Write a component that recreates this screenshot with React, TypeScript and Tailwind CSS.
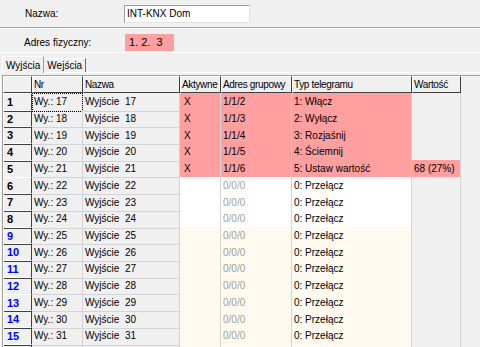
import React from 'react';

const types = ['1: Włącz', '2: Wyłącz', '3: Rozjaśnij', '4: Ściemnij', '5: Ustaw wartość'];

const rows = Array.from({ length: 16 }, (_, k) => {
  const i = k + 1;
  const active = i <= 5;
  const blank = i === 16; // only the top edge of this row is visible
  return {
    id: i,
    num: blank ? '' : String(i),
    nr: blank ? '' : `Wy.: ${16 + i}`,
    name: blank ? '' : `Wyjście\u00a0\u00a0${16 + i}`,
    active,
    addr: blank ? '' : active ? `1/1/${i + 1}` : '0/0/0',
    type: blank ? '' : active ? types[k] : '0: Przełącz',
    value: i === 5 ? '68 (27%)' : '',
    bg: active ? 'bg-[#ff9f9f]' : i <= 8 ? 'bg-white' : 'bg-[#fffaf0]',
  };
});

const cols = 'grid grid-cols-[29px_51px_97px_41px_71px_120px_49px]';

function App() {
  return (
    <div
      className="w-[480px] h-[347px] overflow-hidden bg-[#f0f0f0] text-[10px] text-black"
      style={{ fontFamily: '"Liberation Sans", Arial, sans-serif' }}
    >
      {/* Nazwa */}
      <div className="h-[27px] flex items-center">
        <span className="w-[124px] pl-[25px]">Nazwa:</span>
        <div className="w-[126px] h-[18px] bg-white border-t border-l border-[#a0a0a0] border-r border-b border-r-[#e3e3e3] border-b-[#e3e3e3] flex items-center pl-[2px] leading-none">
          INT-KNX Dom
        </div>
      </div>
      <div className="border-t border-[#a0a0a0] border-b border-b-white" />

      {/* Adres fizyczny */}
      <div className="h-[23px] flex items-center">
        <span className="w-[125px] pl-[24px] pt-[3px]">Adres fizyczny:</span>
        <div className="w-[49px] h-[17px] bg-[#ff9f9f] flex items-center pl-[4px] text-[11px] leading-none mt-[3px]">
          1. 2.&nbsp; 3
        </div>
      </div>
      <div className="border-t border-white" />

      {/* Tabs */}
      <div className="h-[19px] flex items-end pl-[2px]">
        <div className="h-[17px] px-[3px] border-t border-l border-white border-r border-r-[#a0a0a0] bg-[#f0f0f0] flex items-center relative z-10 -mb-px">
          Wyjścia
        </div>
        <div className="h-[14px] px-[3px] border-t border-white border-r border-r-[#696969] flex items-center">
          Wejścia
        </div>
      </div>

      {/* Tab page */}
      <div className="border-t border-white border-l pl-px pt-[2px]">
        <div className="border-t border-l border-[#a0a0a0]">
          {/* header */}
          <div className={`${cols} h-[17px]`}>
            {['', 'Nr', 'Nazwa', 'Aktywne', 'Adres grupowy', 'Typ telegramu', 'Wartość'].map((h, idx) => (
              <div
                key={idx}
                className="border-t border-l border-white border-r border-b border-r-[#404040] border-b-[#404040] flex items-center pl-[1px] whitespace-nowrap overflow-hidden tracking-[-0.35px]"
              >
                {h}
              </div>
            ))}
          </div>
          {rows.map((r) => (
            <div key={r.id} className={`${cols} h-[16.73px]`}>
              <div
                className={`border-t border-l border-white border-r border-b border-r-[#404040] border-b-[#404040] flex items-center pl-[3px] font-bold text-[11px] ${
                  r.id >= 9 ? 'text-[#0000ff]' : 'text-black'
                }`}
              >
                {r.num}
              </div>
              <div
                className={`border-r border-b border-[#d4d4d4] flex items-center pl-[2px] whitespace-nowrap ${
                  r.id === 1 ? 'outline-1 outline-dotted outline-black -outline-offset-1' : ''
                }`}
              >
                {r.nr}
              </div>
              <div className="border-r border-b border-[#d4d4d4] flex items-center pl-[2px] whitespace-nowrap">
                {r.name}
              </div>
              <div className={`border-r border-b border-[#d4d4d4] flex items-center pl-[4px] ${r.bg}`}>
                {r.active ? 'X' : ''}
              </div>
              <div
                className={`border-r border-b border-[#d4d4d4] flex items-center pl-[2px] ${r.bg} ${
                  r.active ? 'text-black' : 'text-[#a0a0a0]'
                }`}
              >
                {r.addr}
              </div>
              <div className={`border-r border-b border-[#d4d4d4] flex items-center pl-[2px] whitespace-nowrap ${r.bg}`}>
                {r.type}
              </div>
              <div
                className={`border-r border-b border-[#d4d4d4] flex items-center pl-[2px] whitespace-nowrap ${
                  r.value ? 'bg-[#ff9f9f]' : 'bg-[#f0f0f0]'
                }`}
              >
                {r.value}
              </div>
            </div>
          ))}
        </div>
      </div>
    </div>
  );
}

export default App;
